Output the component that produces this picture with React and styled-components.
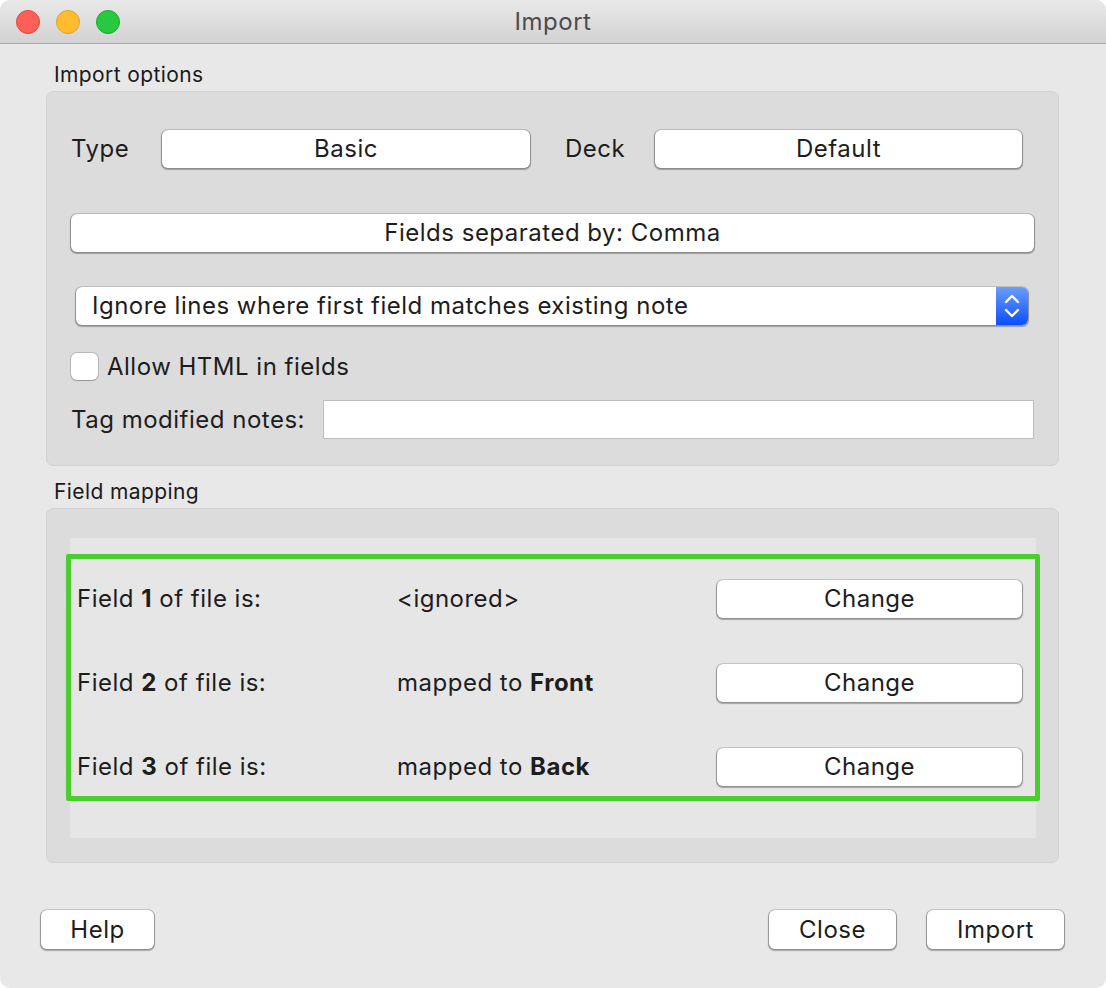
import React from "react";
import styled, { createGlobalStyle } from "styled-components";

const GlobalStyle = createGlobalStyle`
  html, body {
    margin: 0;
    padding: 0;
    background: #ffffff;
  }
  body {
    font-family: Inter, "Noto Sans", "DejaVu Sans", sans-serif;
    color: #1d1d1d;
    letter-spacing: 0.5px;
    line-height: 26px;
  }
  * { box-sizing: border-box; }
`;

const Window = styled.div`
  width: 1106px;
  height: 988px;
  background: #e8e8e8;
  border-radius: 10px;
  overflow: hidden;
  display: flex;
  flex-direction: column;
`;

const TitleBar = styled.div`
  height: 44px;
  flex: none;
  display: flex;
  align-items: center;
  position: relative;
  background: linear-gradient(#e9e9e9, #d2d2d2);
  border-bottom: 1px solid #a9a9a9;
`;

const Lights = styled.div`
  display: flex;
  gap: 16px;
  padding-left: 16px;
`;

const Light = styled.span`
  width: 24px;
  height: 24px;
  border-radius: 50%;
  background: ${p => p.color};
  border: 1px solid ${p => p.edge};
`;

const Title = styled.div`
  position: absolute;
  left: 0;
  right: 0;
  text-align: center;
  font-size: 24px;
  color: #4b4b4b;
  pointer-events: none;
`;

const Content = styled.div`
  padding: 18px 47px 0 46px;
  display: flex;
  flex-direction: column;
`;

const SectionLabel = styled.div`
  font-size: 21px;
  line-height: 26px;
  padding-left: 8px;
  margin-bottom: 3px;
  color: #1a1a1a;
  letter-spacing: 0.4px;
`;

const Group = styled.div`
  background: #dcdcdc;
  border: 1px solid #d2d2d2;
  border-radius: 7px;
  padding: ${p => p.pad};
  display: flex;
  flex-direction: column;
  margin-bottom: ${p => p.mb || "0"};
`;

const Row = styled.div`
  display: flex;
  align-items: center;
  margin-top: ${p => p.mt || "0"};
  margin-right: ${p => p.mr || "0"};
`;

const Label = styled.span`
  font-size: 24px;
  width: ${p => p.w || "auto"};
  margin-left: ${p => p.ml || "0"};
  flex: none;
  white-space: nowrap;
`;

const PushButton = styled.button`
  font-family: inherit;
  font-size: 24px;
  letter-spacing: 0.5px;
  color: #1d1d1d;
  height: ${p => p.h || "38px"};
  width: ${p => p.w || "auto"};
  flex: ${p => (p.grow ? "1" : "none")};
  background: #ffffff;
  border: none;
  border-radius: 6px;
  box-shadow: 0 0 0 1px rgba(0, 0, 0, 0.12), 0 1px 1px 0.5px rgba(0, 0, 0, 0.28);
  padding: 0 0 1px;
  margin: 0;
  cursor: default;
`;

const Select = styled.div`
  margin: 35px 6px 0 5px;
  height: 38px;
  display: flex;
  background: #ffffff;
  border-radius: 6px;
  box-shadow: 0 0 0 1px rgba(0, 0, 0, 0.1), 0 1px 1px 0.5px rgba(0, 0, 0, 0.28);
  overflow: hidden;
`;

const SelectText = styled.span`
  flex: 1;
  font-size: 24px;
  padding-left: 16px;
  display: flex;
  align-items: center;
  padding-bottom: 1px;
`;

const Stepper = styled.span`
  width: 32px;
  flex: none;
  display: flex;
  align-items: center;
  justify-content: center;
  background: linear-gradient(#6a9dfd, #0b4ff7);
`;

const CheckRow = styled.label`
  display: flex;
  align-items: center;
  gap: 9px;
  margin-top: 28px;
  font-size: 24px;
`;

const CheckBox = styled.span`
  width: 27px;
  height: 27px;
  background: #ffffff;
  border-radius: 6px;
  box-shadow: 0 0 0 1px rgba(0, 0, 0, 0.16), 0 1px 1px rgba(0, 0, 0, 0.18);
`;

const TextInput = styled.input`
  flex: 1;
  height: 39px;
  margin-left: 18px;
  border: 1px solid #bcbcbc;
  background: #ffffff;
  outline: none;
  font-family: inherit;
  font-size: 20px;
`;

const ScrollArea = styled.div`
  background: #e6e6e6;
  height: 300px;
  padding-top: 16px;
`;

const Highlight = styled.div`
  margin-left: -4px;
  width: 974px;
  height: 247px;
  border: 5px solid #4ccd2f;
  border-radius: 2px;
  padding: 21px 13px 10px 6px;
  display: flex;
  flex-direction: column;
  gap: 46px;
`;

const MapRow = styled.div`
  display: flex;
  align-items: center;
  height: 38px;
`;

const MapText = styled.span`
  font-size: 24px;
  width: ${p => p.w};
  flex: none;
  white-space: nowrap;
  b { font-weight: 700; }
`;

const Footer = styled.div`
  display: flex;
  align-items: center;
  padding: 47px 42px 0 41px;
  gap: 31px;
`;

const Spacer = styled.div`
  flex: 1;
`;

const Chevrons = () => (
  <svg width="18" height="28" viewBox="0 0 18 28" fill="none">
    <path d="M3 10 L9 4 L15 10" stroke="#ffffff" strokeWidth="2.4" strokeLinecap="round" strokeLinejoin="round" />
    <path d="M3 18 L9 24 L15 18" stroke="#ffffff" strokeWidth="2.4" strokeLinecap="round" strokeLinejoin="round" />
  </svg>
);

const mappings = [
  { n: 1, value: <>&lt;ignored&gt;</> },
  { n: 2, value: <>mapped to <b>Front</b></> },
  { n: 3, value: <>mapped to <b>Back</b></> },
];

export default function App() {
  return (
    <>
      <GlobalStyle />
      <Window>
        <TitleBar>
          <Lights>
            <Light color="#fe5f57" edge="#e0443e" />
            <Light color="#febc2e" edge="#dea123" />
            <Light color="#28c840" edge="#1aab29" />
          </Lights>
          <Title>Import</Title>
        </TitleBar>

        <Content>
          <SectionLabel>Import options</SectionLabel>
          <Group pad="38px 24px 26px 24px" mb="13px">
            <Row mr="12px">
              <Label w="91px">Type</Label>
              <PushButton w="368px">Basic</PushButton>
              <Label w="90px" ml="35px">Deck</Label>
              <PushButton grow>Default</PushButton>
            </Row>
            <Row mt="46px">
              <PushButton grow>Fields separated by: Comma</PushButton>
            </Row>
            <Select>
              <SelectText>Ignore lines where first field matches existing note</SelectText>
              <Stepper>
                <Chevrons />
              </Stepper>
            </Select>
            <CheckRow>
              <CheckBox />
              Allow HTML in fields
            </CheckRow>
            <Row mt="20px">
              <Label>Tag modified notes:</Label>
              <TextInput />
            </Row>
          </Group>

          <SectionLabel>Field mapping</SectionLabel>
          <Group pad="29px 22px 24px 23px">
            <ScrollArea>
              <Highlight>
                {mappings.map(m => (
                  <MapRow key={m.n}>
                    <MapText w="320px">
                      Field <b>{m.n}</b> of file is:
                    </MapText>
                    <MapText w="320px">{m.value}</MapText>
                    <PushButton w="305px">Change</PushButton>
                  </MapRow>
                ))}
              </Highlight>
            </ScrollArea>
          </Group>
        </Content>

        <Footer>
          <PushButton w="113px" h="39px">Help</PushButton>
          <Spacer />
          <PushButton w="127px" h="39px">Close</PushButton>
          <PushButton w="137px" h="39px">Import</PushButton>
        </Footer>
      </Window>
    </>
  );
}
